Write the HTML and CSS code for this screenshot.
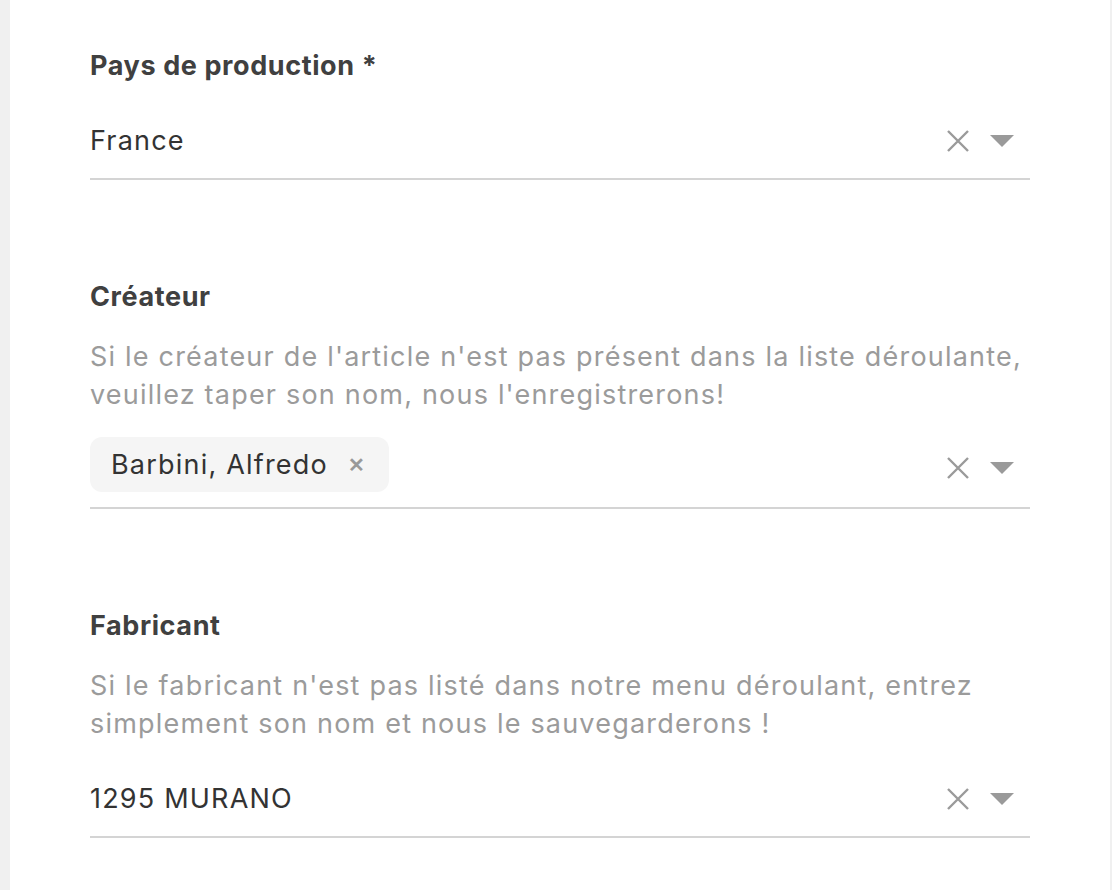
FILE: index.html
```html
<!DOCTYPE html>
<html lang="fr">
<head>
<meta charset="utf-8">
<title>Formulaire</title>
<link rel="stylesheet" href="styles.css">
</head>
<body>
<div class="page">
  <main class="panel">
    <section class="field first">
      <div class="label">Pays de production *</div>
      <div class="control">
        <div class="values"><span class="value">France</span></div>
        <div class="icons">
          <svg class="clear" viewBox="0 0 24 24" width="24" height="24"><path d="M2 2 L22 22 M22 2 L2 22" stroke="#9a9a9a" stroke-width="2.4" fill="none"/></svg>
          <svg class="caret" viewBox="0 0 24 12" width="24" height="12"><path d="M0 0 H24 L12 12 Z" fill="#9a9a9a"/></svg>
        </div>
      </div>
    </section>

    <section class="field">
      <div class="label">Créateur</div>
      <p class="help">Si le créateur de l'article n'est pas présent dans la liste déroulante, veuillez taper son nom, nous l'enregistrerons!</p>
      <div class="control has-chip">
        <div class="values">
          <span class="chip">Barbini, Alfredo <span class="chip-x">✕</span></span>
        </div>
        <div class="icons">
          <svg class="clear" viewBox="0 0 24 24" width="24" height="24"><path d="M2 2 L22 22 M22 2 L2 22" stroke="#9a9a9a" stroke-width="2.4" fill="none"/></svg>
          <svg class="caret" viewBox="0 0 24 12" width="24" height="12"><path d="M0 0 H24 L12 12 Z" fill="#9a9a9a"/></svg>
        </div>
      </div>
    </section>

    <section class="field">
      <div class="label">Fabricant</div>
      <p class="help">Si le fabricant n'est pas listé dans notre menu déroulant, entrez simplement son nom et nous le sauvegarderons !</p>
      <div class="control">
        <div class="values"><span class="value">1295 MURANO</span></div>
        <div class="icons">
          <svg class="clear" viewBox="0 0 24 24" width="24" height="24"><path d="M2 2 L22 22 M22 2 L2 22" stroke="#9a9a9a" stroke-width="2.4" fill="none"/></svg>
          <svg class="caret" viewBox="0 0 24 12" width="24" height="12"><path d="M0 0 H24 L12 12 Z" fill="#9a9a9a"/></svg>
        </div>
      </div>
    </section>
  </main>
</div>
</body>
</html>
```

FILE: styles.css
```css
html, body {
  margin: 0;
  padding: 0;
  height: 100%;
}
body {
  background: #f0f0f0;
  font-family: "Inter", "Liberation Sans", sans-serif;
  color: #333;
}
.page {
  padding: 0 2px 0 10px;
  height: 100%;
}
.panel {
  background: #fff;
  height: 100%;
  padding: 47px 80px 0 80px;
  box-sizing: border-box;
}
.field {
  margin-top: 98px;
}
.field.first {
  margin-top: 0;
}
.label {
  font-size: 27px;
  line-height: 38px;
  font-weight: 700;
  color: #404040;
  letter-spacing: 0.6px;
  margin-bottom: 19px;
}
.help {
  margin: 22px 0 19px;
  font-size: 27px;
  line-height: 38px;
  letter-spacing: 1.2px;
  color: #9b9b9b;
  max-width: 940px;
}
.control {
  display: flex;
  align-items: center;
  padding: 8px 0;
  min-height: 58px;
  border-bottom: 2px solid #d4d4d4;
}
.control.has-chip {
  padding-top: 4px;
}
.values {
  flex: 1;
  display: flex;
  align-items: center;
}
.value {
  font-size: 27px;
  line-height: 38px;
  letter-spacing: 1.2px;
  color: #333;
}
.chip {
  display: inline-flex;
  align-items: center;
  height: 55px;
  margin-bottom: 7px;
  padding: 0 23px 0 21px;
  background: #f5f5f5;
  border-radius: 12px;
  font-size: 27px;
  letter-spacing: 1.2px;
  color: #333;
}
.chip-x {
  margin-left: 20px;
  font-size: 20px;
  color: #999;
  font-weight: 700;
}
.icons {
  display: flex;
  align-items: center;
  gap: 20px;
  padding-right: 16px;
}
.clear {
  display: block;
}
.caret {
  display: block;
}
```
